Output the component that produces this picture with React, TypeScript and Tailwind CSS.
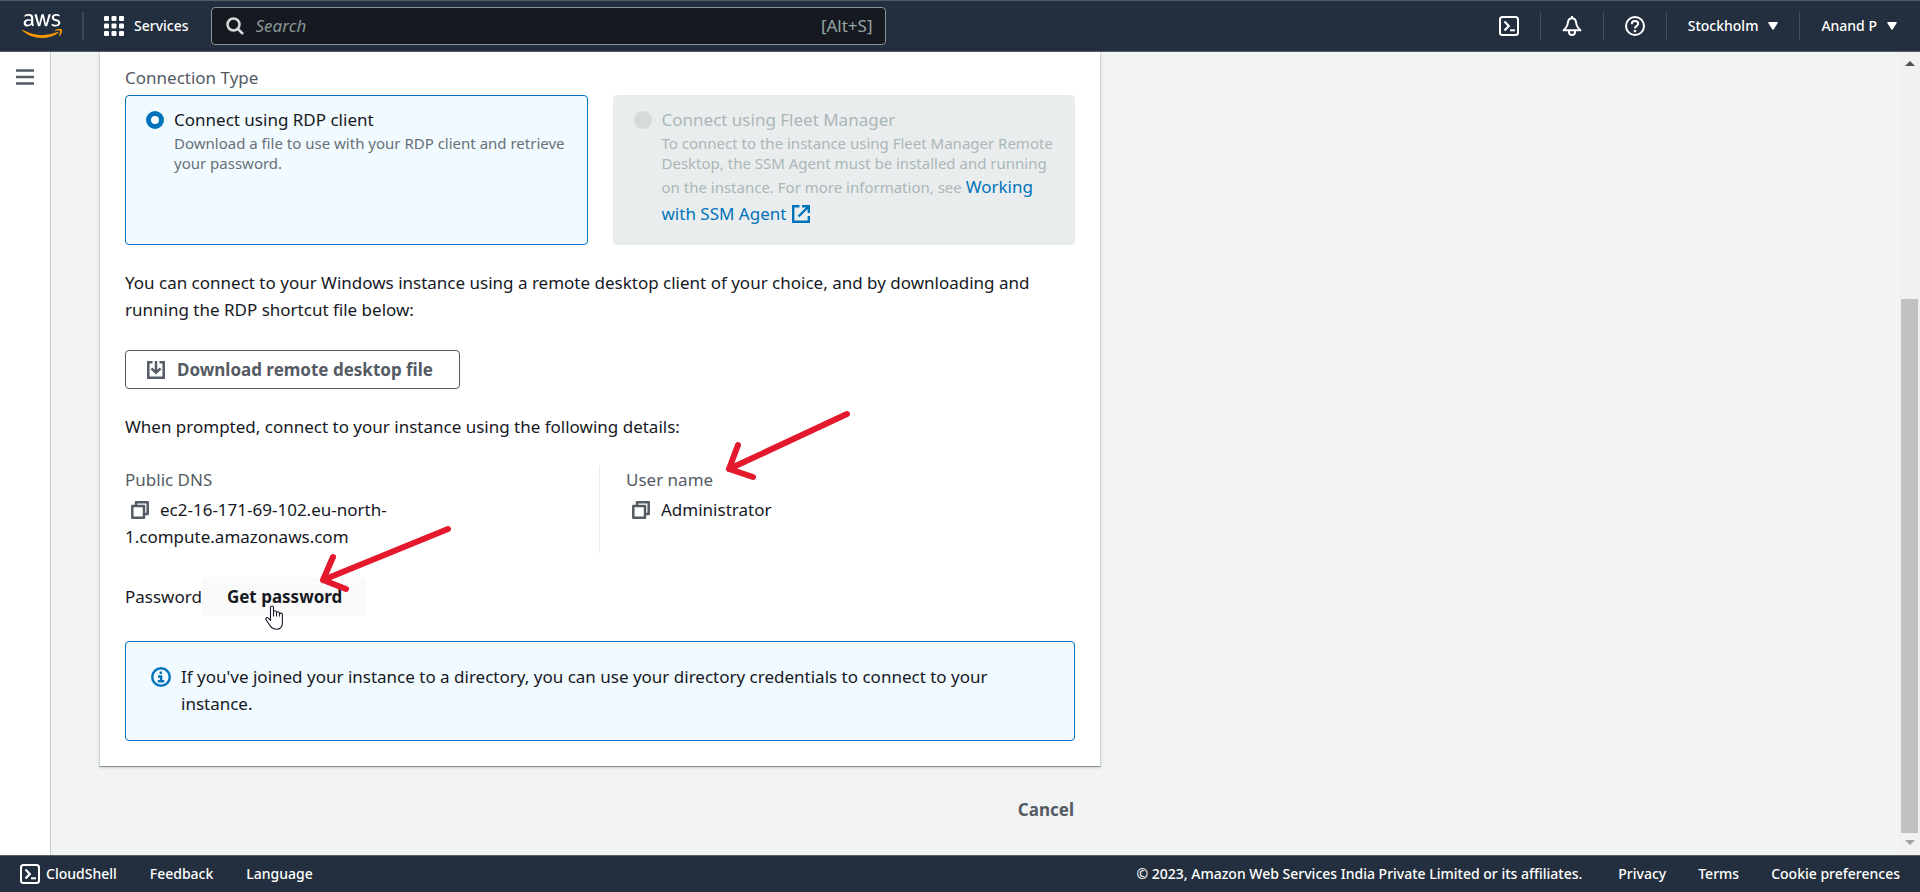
import React from "react";
import { FaAws } from "react-icons/fa";

function CloudShellIcon() {
  return (
    <svg viewBox="0 0 20 20" className="size-5 shrink-0" fill="none" stroke="currentColor" strokeWidth="2" aria-hidden="true">
      <rect x="1" y="1" width="18" height="18" rx="2.5" />
      <path d="M5.5 5.5 9.8 10l-4.3 4.5" strokeWidth="2.2" />
      <path d="M11 14.3h5" />
    </svg>
  );
}

function BellIcon() {
  return (
    <svg viewBox="0 0 20 20" className="size-5" fill="none" stroke="currentColor" strokeWidth="2" strokeLinejoin="round" aria-hidden="true">
      <path d="M10 2.200C7.600 2.200 6.200 4 5.900 6.500 5.500 10 4.800 11.600 1.500 14.200h17C15.200 11.600 14.500 10 14.100 6.500 13.800 4 12.400 2.200 10 2.200Z" />
      <path d="M10 0v2" />
      <path d="M7 15v1a3 3 0 0 0 6 0v-1" />
    </svg>
  );
}

function HelpIcon() {
  return (
    <svg viewBox="0 0 20 20" className="size-5" fill="none" stroke="currentColor" strokeWidth="2" aria-hidden="true">
      <circle cx="10" cy="10" r="9" />
      <path d="M6.800 8.200V7.800C6.800 6 8.100 5 10 5s3.200 1 3.200 2.700C13.200 10 10 9.800 10 12.500" />
      <path d="M10 14v2.200" strokeWidth="2.400" />
    </svg>
  );
}

function GridIcon() {
  const cells = [0, 7.5, 15];
  return (
    <svg viewBox="0 0 20 20" className="size-5" fill="currentColor" aria-hidden="true">
      {cells.map((y) => cells.map((x) => <rect key={`${x}-${y}`} x={x} y={y} width="5" height="5" rx="1" />))}
    </svg>
  );
}

function MenuIcon() {
  return (
    <svg viewBox="0 0 18 18" className="size-[18px]" stroke="currentColor" strokeWidth="2.400" aria-hidden="true">
      <path d="M0 2.500h18M0 9h18M0 15.500h18" />
    </svg>
  );
}

function SearchIcon() {
  return (
    <svg viewBox="0 0 18 18" className="size-[18px] shrink-0" fill="none" stroke="currentColor" strokeWidth="2.500" aria-hidden="true">
      <circle cx="7.500" cy="7.500" r="6" />
      <path d="m12 12 5 5" />
    </svg>
  );
}

function Caret() {
  return (
    <svg viewBox="0 0 10 8" className="h-2 w-2.5" fill="currentColor" aria-hidden="true">
      <path d="M.8 0h8.400q1 0 .5.900L5.600 7.400q-.6.900-1.200 0L.3.900Q-.2 0 .8 0Z" />
    </svg>
  );
}

function CopyIcon() {
  return (
    <svg viewBox="0 0 18 18" className="size-[18px]" fill="none" stroke="currentColor" strokeWidth="2.500" strokeLinejoin="round" aria-hidden="true">
      <rect x="1.300" y="5" width="11.700" height="11.700" />
      <path d="M5 5V1.300h11.700V13H13" />
    </svg>
  );
}

function ExternalIcon() {
  return (
    <svg viewBox="0 0 18 18" className="ml-1.5 inline size-[18px] align-[-3px]" fill="none" stroke="currentColor" strokeWidth="2.400" aria-hidden="true">
      <path d="M7.500 1.200H1.200v15.600h15.600V11" />
      <path d="M10 1.200h6.800V8M16.500 1.500 6.500 11.500" />
    </svg>
  );
}

function DownloadIcon() {
  return (
    <svg viewBox="0 0 18 18" className="size-[18px]" fill="none" stroke="currentColor" strokeWidth="2.500" aria-hidden="true">
      <path d="M5.500 1.300H1.300v15.400h15.400V1.300h-4.200" />
      <path d="M9 0v11.500M4.500 7.300 9 11.800l4.500-4.500" />
    </svg>
  );
}

function InfoIcon() {
  return (
    <svg viewBox="0 0 20 20" className="size-5 shrink-0 text-[#0073bb]" fill="none" stroke="currentColor" strokeWidth="2.400" aria-hidden="true">
      <circle cx="10" cy="10" r="8.800" />
      <path d="M9.800 4.500V7M7 9.500h3.100v5M6.800 14.200h6.400" />
    </svg>
  );
}

function HandPointer() {
  return (
    <svg viewBox="0 0 18 25" className="absolute left-[63px] top-7 h-[25px] w-[18px]" fill="#fff" stroke="#1b1b30" strokeWidth="1.100" strokeLinejoin="round" aria-hidden="true">
      <path d="M5.500 14.500V2.500a1.500 1.500 0 0 1 3 0V7q.2-1.200 1.500-1.200T11.500 7v1q.3-1.200 1.500-1.200t1.500 1.400v.8q.3-.9 1.400-.9 1.500 0 1.500 1.500v7.900q0 6.800-6 6.800c-4.500 0-6-2.800-7.800-5.800L1 14.600c-.8-1.600 1-2.700 2.300-1.500l2.200 2.400Z" />
      <path d="M8.500 7v4.500M11.500 8v3.500M14.500 9v2.500" />
    </svg>
  );
}

function Divider() {
  return <span className="h-7 w-px bg-[#414d5c]" />;
}

function TopBar() {
  return (
    <header className="flex h-[52px] shrink-0 items-center justify-between border-y border-[#545b64] bg-[#232f3e] pl-[22px] pr-[23px] text-sm font-medium text-white">
      <div className="flex items-center">
        <a href="#home" aria-label="AWS home" className="flex">
          <svg width="0" height="0" className="absolute" aria-hidden="true">
            <linearGradient id="awsFill" gradientUnits="userSpaceOnUse" x1="0" y1="0" x2="0" y2="512">
              <stop offset="0.600" stopColor="#fff" />
              <stop offset="0.600" stopColor="#ff9900" />
            </linearGradient>
          </svg>
          <FaAws fill="url(#awsFill)" className="h-8 w-10" />
        </a>
        <span className="ml-5 h-7 w-0.5 bg-[#414750]" />
        <button type="button" className="ml-5 flex items-center gap-2.5">
          <GridIcon />
          Services
        </button>
        <label className="ml-[22px] flex h-[38px] w-[675px] items-center gap-3 rounded-sm border border-[#879596] bg-[#16191f] pl-3.5 pr-3 text-[17px] font-normal text-[#95a5a6]">
          <span className="text-[#d5dbdb]">
            <SearchIcon />
          </span>
          <input type="text" aria-label="Search" placeholder="Search" className="min-w-0 flex-1 bg-transparent outline-none placeholder:italic placeholder:text-[#879596]" />
          <span>[Alt+S]</span>
        </label>
      </div>
      <div className="flex items-center">
        <button type="button" aria-label="CloudShell" className="mr-[21px]">
          <CloudShellIcon />
        </button>
        <Divider />
        <button type="button" aria-label="Notifications" className="mx-[21px]">
          <BellIcon />
        </button>
        <Divider />
        <button type="button" aria-label="Help" className="mx-[21px]">
          <HelpIcon />
        </button>
        <Divider />
        <button type="button" className="mx-[21px] flex items-center gap-2.5">
          Stockholm
          <Caret />
        </button>
        <Divider />
        <button type="button" className="ml-[21px] flex items-center gap-2.5">
          Anand P
          <Caret />
        </button>
      </div>
    </header>
  );
}

function ConnectionTypes() {
  return (
    <fieldset>
      <legend className="text-[#545b64]">Connection Type</legend>
      <div className="mt-1 grid grid-cols-2 gap-[25px]">
        <label className="flex min-h-[150px] items-start gap-2.5 rounded-sm border border-[#0073bb] bg-[#f1faff] px-5 py-2.5">
          <input type="radio" name="connection" defaultChecked className="mt-[5px] size-[18px] shrink-0 appearance-none rounded-full border-[5px] border-[#0073bb] bg-white" />
          <span>
            <span className="block">Connect using RDP client</span>
            <span className="block text-[15px]/5 text-[#687078]">Download a file to use with your RDP client and retrieve your password.</span>
          </span>
        </label>
        <div className="flex min-h-[150px] items-start gap-2.5 rounded-sm border border-[#eaeded] bg-[#eaeded] px-5 py-2.5">
          <input id="fleet" type="radio" name="connection" disabled className="mt-[5px] size-[18px] shrink-0 appearance-none rounded-full bg-[#d5dbdb]" />
          <div className="text-[#aab7b8]">
            <label htmlFor="fleet" className="block">Connect using Fleet Manager</label>
            <div className="text-[15px]/5">
              To connect to the instance using Fleet Manager Remote Desktop, the SSM Agent must be installed and running on the instance. For more information, see{" "}
              <a href="#ssm-agent" className="text-[17px]/[27px] text-[#0073bb]">
                Working with SSM Agent
                <ExternalIcon />
              </a>
            </div>
          </div>
        </div>
      </div>
    </fieldset>
  );
}

function Details() {
  return (
    <div className="mt-[26px] grid grid-cols-2">
      <dl className="border-r border-[#eaeded] pb-[3px]">
        <dt className="text-[#545b64]">Public DNS</dt>
        <dd className="mt-[3px] w-[300px]">
          <button type="button" aria-label="Copy public DNS" className="ml-1.5 mr-[11px] inline-flex align-[-3px] text-[#545b64]">
            <CopyIcon />
          </button>
          ec2-16-171-69-102.eu-north-1.compute.amazonaws.com
        </dd>
      </dl>
      <dl className="relative pl-[26px]">
        <dt className="text-[#545b64]">User name</dt>
        <dd className="mt-[3px]">
          <button type="button" aria-label="Copy user name" className="ml-1.5 mr-[11px] inline-flex align-[-3px] text-[#545b64]">
            <CopyIcon />
          </button>
          Administrator
        </dd>
        <svg viewBox="0 0 130 74" className="absolute left-[123px] -top-14 h-[74px] w-[130px]" fill="none" stroke="#e5192d" strokeWidth="6" strokeLinecap="round" strokeLinejoin="round" aria-hidden="true">
          <path d="M124 4 6 59M15 35 6 59l24 8" />
        </svg>
      </dl>
    </div>
  );
}

function PasswordRow() {
  return (
    <div className="mt-6 flex items-center">
      <span>Password</span>
      <div className="relative">
        <button type="button" className="h-[39px] rounded-sm bg-[#fafafa] px-[25px] font-bold text-[#16191f]">
          Get password
        </button>
        <HandPointer />
        <svg viewBox="0 0 136 72" className="absolute left-[115px] -top-[52px] h-[72px] w-[136px]" fill="none" stroke="#e5192d" strokeWidth="6" strokeLinecap="round" strokeLinejoin="round" aria-hidden="true">
          <path d="M131 4 6 55M16 32 6 55l23 9" />
        </svg>
      </div>
    </div>
  );
}

function Footer() {
  return (
    <footer className="flex h-[37px] shrink-0 items-center justify-between border-t border-[#545b64] bg-[#232f3e] px-5 text-sm font-medium text-white">
      <div className="flex items-center gap-[33px]">
        <button type="button" className="flex items-center gap-1.5">
          <CloudShellIcon />
          CloudShell
        </button>
        <a href="#feedback">Feedback</a>
        <button type="button">Language</button>
      </div>
      <div className="flex items-center gap-8">
        <span className="mr-1">© 2023, Amazon Web Services India Private Limited or its affiliates.</span>
        <a href="#privacy">Privacy</a>
        <a href="#terms">Terms</a>
        <button type="button">Cookie preferences</button>
      </div>
    </footer>
  );
}

function ScrollTrack() {
  return (
    <div className="flex w-[21px] shrink-0 flex-col items-center bg-[#f1f1f1] pb-[10px] pt-[9px]" aria-hidden="true">
      <svg viewBox="0 0 10 5" className="h-[5px] w-2.5" fill="#505050">
        <path d="M5 0 10 5H0Z" />
      </svg>
      <div className="mt-[7px] flex w-[17px] flex-1 flex-col">
        <div className="flex-[226]" />
        <div className="flex-[535] bg-[#c1c1c1]" />
      </div>
      <svg viewBox="0 0 10 5" className="mt-[7px] h-[5px] w-2.5" fill="#a3a3a3">
        <path d="M0 0h10L5 5Z" />
      </svg>
    </div>
  );
}

export default function App() {
  return (
    <div className="flex h-screen flex-col bg-[#f2f3f3] font-['Noto_Sans',sans-serif] text-[17px]/[27px] text-[#16191f]">
      <TopBar />
      <div className="flex min-h-0 flex-1 overflow-hidden">
        <nav className="w-[51px] shrink-0 border-r border-[#c4cccc] bg-white pt-4">
          <button type="button" aria-label="Open navigation" className="mx-auto flex text-[#545b64]">
            <MenuIcon />
          </button>
        </nav>
        <main className="min-w-0 flex-1 px-12">
          <div className="max-w-[1002px]">
            <section className="border-x border-b border-x-[#d0d5d5] border-b-[#879596] bg-white px-[25px] pb-[25px] pt-3 shadow-sm">
              <ConnectionTypes />
              <p className="mt-6">
                You can connect to your Windows instance using a remote desktop client of your choice, and by downloading and running the RDP shortcut file below:
              </p>
              <button type="button" className="mt-[27px] flex h-[39px] items-center gap-3 rounded-sm border border-[#545b64] bg-white pl-[21px] pr-[26px] font-bold text-[#545b64]">
                <DownloadIcon />
                Download remote desktop file
              </button>
              <p className="mt-6">When prompted, connect to your instance using the following details:</p>
              <Details />
              <PasswordRow />
              <div className="mt-[25px] flex min-h-[100px] items-start gap-2.5 rounded-sm border border-[#0073bb] bg-[#f1faff] px-[25px] py-[21px]">
                <span className="mt-1">
                  <InfoIcon />
                </span>
                <p>If you've joined your instance to a directory, you can use your directory credentials to connect to your instance.</p>
              </div>
            </section>
            <div className="flex justify-end px-[27px] pt-[29px]">
              <button type="button" className="font-bold text-[#545b64]">Cancel</button>
            </div>
          </div>
        </main>
        <ScrollTrack />
      </div>
      <Footer />
    </div>
  );
}
